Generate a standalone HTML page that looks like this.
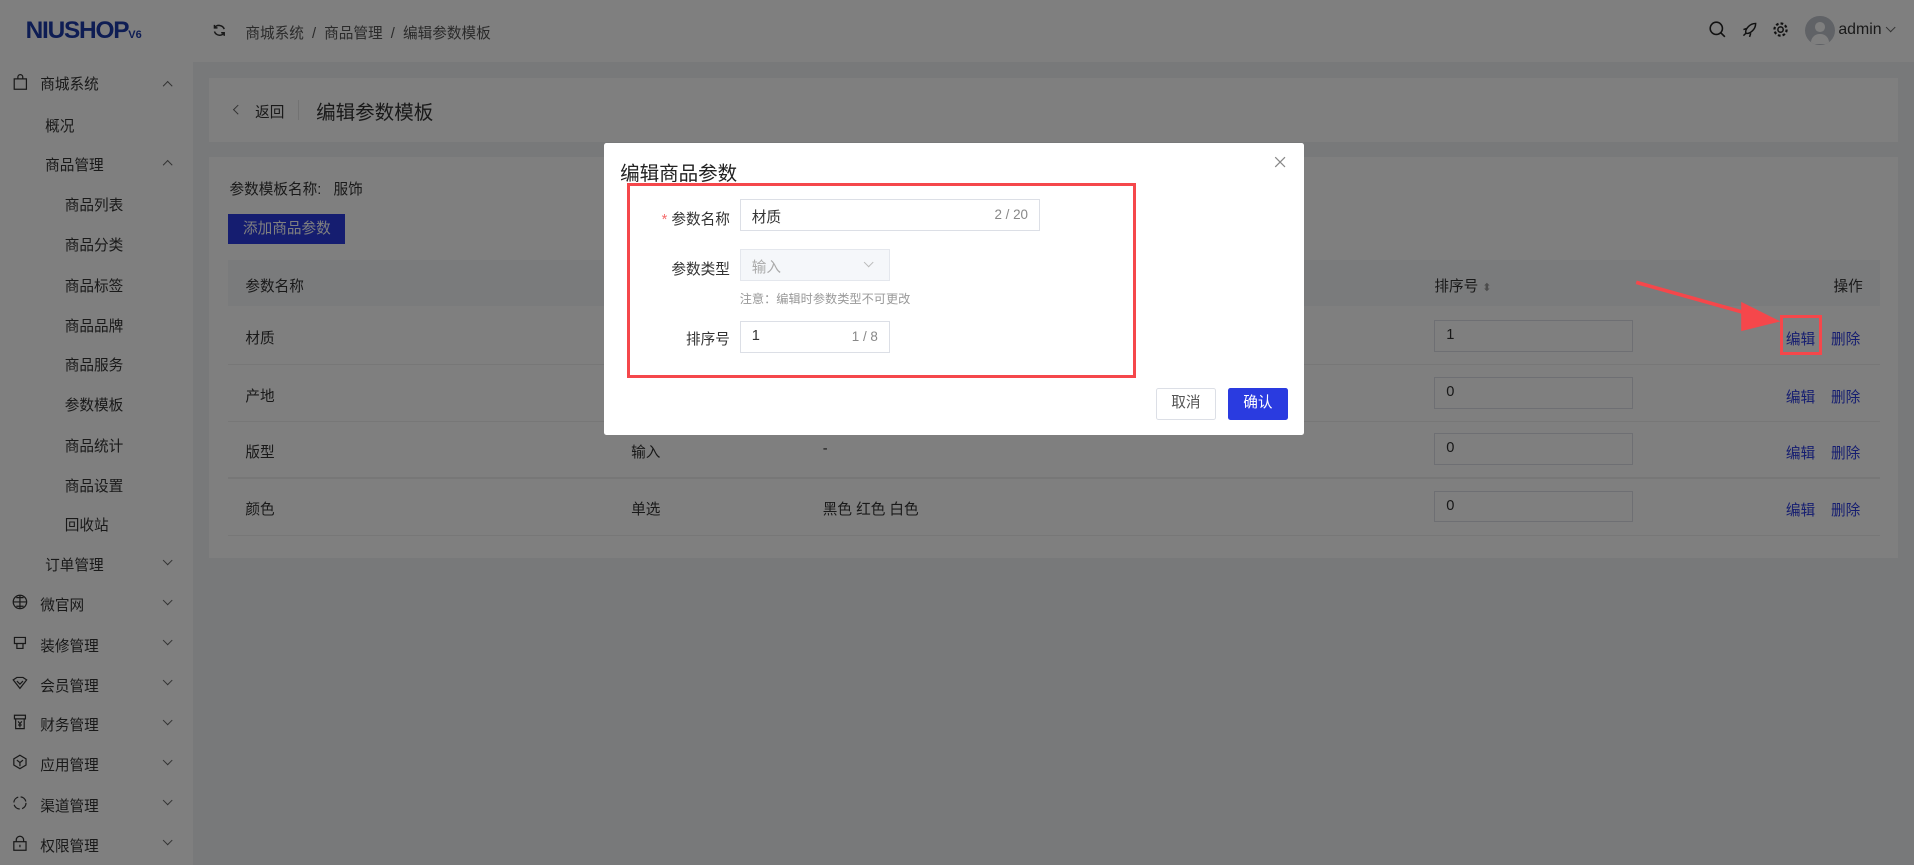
<!DOCTYPE html>
<html><head><meta charset="utf-8"><style>
*{margin:0;padding:0;box-sizing:border-box}
html,body{width:1914px;height:865px;overflow:hidden}
body{font-family:"Liberation Sans","Noto Sans CJK SC",sans-serif;font-size:12px;color:#333;background:#f0f2f5;position:relative}
#w{zoom:1.2207;width:1568px;height:709px;position:relative;overflow:hidden}
.a{position:absolute;white-space:nowrap}
.side{position:absolute;left:0;top:0;width:158px;height:709px;background:#fff}
.hdr{position:absolute;left:158px;top:0;right:0;height:51px;background:#fff}
.card{position:absolute;left:171px;width:1384px;background:#fff}
.chev{position:absolute;width:6px;height:6px;border-right:1px solid #666;border-bottom:1px solid #666}
.inp{position:absolute;border:1px solid #dcdfe6;background:#fff;height:26px}
.ov{position:absolute;left:0;top:0;width:1568px;height:709px;background:rgba(0,0,0,.5)}
.lnk{color:#2a3be0}
</style></head><body><div id="w">
<div class="side">
<div class="a" style="left:21px;top:14px;font-size:20px;font-weight:bold;color:#1c3aa9;letter-spacing:-1px">NIUSHOP<span style="font-size:9px;letter-spacing:0">V6</span></div>
<svg class="a" style="left:11px;top:61px" width="12" height="13" viewBox="0 0 12 13"><rect x="1" y="4" width="10" height="8.5" fill="none" stroke="#333"/><path d="M4 4V2.5a2 2 0 0 1 4 0V4" fill="none" stroke="#333"/></svg>
<div class="a" style="left:33px;top:60px">商城系统</div><div class="chev" style="left:134px;top:67px;transform:rotate(-135deg)"></div>
<div class="a" style="left:37px;top:94px">概况</div>
<div class="a" style="left:37px;top:126px">商品管理</div><div class="chev" style="left:134px;top:132px;transform:rotate(-135deg)"></div>
<div class="a" style="left:53px;top:159px">商品列表</div>
<div class="a" style="left:53px;top:192px">商品分类</div>
<div class="a" style="left:53px;top:225px">商品标签</div>
<div class="a" style="left:53px;top:258px">商品品牌</div>
<div class="a" style="left:53px;top:290px">商品服务</div>
<div class="a" style="left:53px;top:323px">参数模板</div>
<div class="a" style="left:53px;top:356px">商品统计</div>
<div class="a" style="left:53px;top:389px">商品设置</div>
<div class="a" style="left:53px;top:421px">回收站</div>
<div class="a" style="left:37px;top:454px">订单管理</div><div class="chev" style="left:134px;top:456px;transform:rotate(45deg)"></div>
<div class="a" style="left:33px;top:487px">微官网</div>
<div class="a" style="left:33px;top:520px">装修管理</div>
<div class="a" style="left:33px;top:553px">会员管理</div>
<div class="a" style="left:33px;top:585px">财务管理</div>
<div class="a" style="left:33px;top:618px">应用管理</div>
<div class="a" style="left:33px;top:651px">渠道管理</div>
<div class="a" style="left:33px;top:684px">权限管理</div>
<div class="chev" style="left:134px;top:489px;transform:rotate(45deg)"></div>
<div class="chev" style="left:134px;top:522px;transform:rotate(45deg)"></div>
<div class="chev" style="left:134px;top:555px;transform:rotate(45deg)"></div>
<div class="chev" style="left:134px;top:587px;transform:rotate(45deg)"></div>
<div class="chev" style="left:134px;top:620px;transform:rotate(45deg)"></div>
<div class="chev" style="left:134px;top:653px;transform:rotate(45deg)"></div>
<div class="chev" style="left:134px;top:686px;transform:rotate(45deg)"></div>
<svg class="a" style="left:10px;top:487px" width="13" height="13"><circle cx="6.5" cy="6.5" r="5.5" fill="none" stroke="#333"/><path d="M1 6.5h11M6.5 1v11M3.5 3h6M3.5 10h6" stroke="#333" fill="none"/></svg>
<svg class="a" style="left:10px;top:520px" width="13" height="13"><path d="M2 2h9v5H2zM4 7v4h5V7" stroke="#333" fill="none"/></svg>
<svg class="a" style="left:10px;top:553px" width="13" height="13"><path d="M1 4l3-2h5l3 2-5.5 7z M4 5l2.5 2.5L9 5" stroke="#333" fill="none"/></svg>
<svg class="a" style="left:10px;top:585px" width="13" height="13"><path d="M2 1h9v3H2zM3 4v8h7V4M5 6l1.5 2L8 6M6.5 8v3M5 9h3" stroke="#333" fill="none"/></svg>
<svg class="a" style="left:10px;top:618px" width="13" height="13"><path d="M6.5 1l5 3v5l-5 3-5-3V4zM4 5l2.5 2L9 5M6.5 7v3" stroke="#333" fill="none"/></svg>
<svg class="a" style="left:10px;top:651px" width="13" height="13"><circle cx="6.5" cy="6.5" r="5" fill="none" stroke="#333" stroke-dasharray="6 2"/></svg>
<svg class="a" style="left:10px;top:684px" width="13" height="13"><rect x="1.5" y="5.5" width="10" height="7" fill="none" stroke="#333"/><path d="M3.5 5.5V4a3 3 0 0 1 6 0v1.5M6.5 8v2" stroke="#333" fill="none"/></svg>
</div>
<div class="hdr">
<svg class="a" style="left:16px;top:19px" width="12" height="12"><path d="M10 5A4.5 4.5 0 0 0 2 4M2 7a4.5 4.5 0 0 0 8 1M2 1.5V4h2.5M10 10.5V8H7.5" stroke="#333" fill="none" stroke-width="1.2"/></svg>
<div class="a" style="left:43px;top:18px;color:#555">商城系统 &nbsp;/&nbsp; 商品管理 &nbsp;/&nbsp; 编辑参数模板</div>
<svg class="a" style="left:1242px;top:17px" width="14" height="14"><circle cx="6" cy="6" r="5" fill="none" stroke="#222" stroke-width="1.3"/><path d="M9.5 9.5L13 13" stroke="#222" stroke-width="1.3"/></svg>
<svg class="a" style="left:1268px;top:17px" width="14" height="14"><path d="M4 10C3 7 7 2 12 2c0 5-5 9-8 8zM4 10l-2 2M5 6L2 7M8 10l-1 3" stroke="#222" fill="none" stroke-width="1.2"/></svg>
<svg class="a" style="left:1294px;top:17px" width="14" height="14"><circle cx="7" cy="7" r="2.2" fill="none" stroke="#222" stroke-width="1.2"/><circle cx="7" cy="7" r="5" fill="none" stroke="#222" stroke-width="1.8" stroke-dasharray="2.2 1.7"/></svg>
<div class="a" style="left:1321px;top:13px;width:24px;height:24px;border-radius:50%;background:#c0c4cc;overflow:hidden"><div style="position:absolute;left:8px;top:5px;width:8px;height:8px;border-radius:50%;background:#fff"></div><div style="position:absolute;left:5px;top:15px;width:14px;height:8px;border-radius:7px 7px 0 0;background:#fff"></div></div>
<div class="a" style="left:1348px;top:17px;font-size:13px;color:#333">admin</div>
<div class="chev" style="left:1388px;top:20px;transform:rotate(45deg)"></div>
</div>
<div class="card" style="top:64px;height:52px">
<div class="chev" style="left:21px;top:23px;transform:rotate(135deg)"></div>
<div class="a" style="left:38px;top:19px">返回</div>
<div class="a" style="left:73px;top:18px;width:1px;height:16px;background:#e4e4e4"></div>
<div class="a" style="left:88px;top:15px;font-size:16px">编辑参数模板</div>
</div>
<div class="card" style="top:129px;height:328px">
<div class="a" style="left:17px;top:17px">参数模板名称: &nbsp; 服饰</div>
<div class="a" style="left:16px;top:46px;width:96px;height:25px;background:#2a3be0;color:#fff;text-align:center;line-height:25px">添加商品参数</div>
<div class="a" style="left:16px;top:84px;width:1353px;height:38px;background:#f5f6f9"></div>
<div class="a" style="left:30px;top:96px">参数名称</div>
<div class="a" style="left:1004px;top:96px">排序号 <span style="color:#999;font-size:9px">⬍</span></div>
<div class="a" style="left:1331px;top:96px">操作</div>
</div>
<div class="a" style="left:187px;top:298px;width:1353px;height:1px;background:#eee"></div>
<div class="a" style="left:187px;top:345px;width:1353px;height:1px;background:#eee"></div>
<div class="a" style="left:187px;top:391px;width:1353px;height:1px;background:#eee"></div>
<div class="a" style="left:187px;top:438px;width:1353px;height:1px;background:#eee"></div>
<div class="a" style="left:201px;top:268px">材质</div>
<div class="a" style="left:201px;top:315px">产地</div>
<div class="a" style="left:201px;top:361px">版型</div>
<div class="a" style="left:201px;top:408px">颜色</div>
<div class="a" style="left:517px;top:361px">输入</div><div class="a" style="left:674px;top:361px">-</div>
<div class="a" style="left:517px;top:408px">单选</div><div class="a" style="left:674px;top:408px">黑色 红色 白色</div>
<div class="inp" style="left:1175px;top:262px;width:163px"><span class="a" style="left:9px;top:5px">1</span></div>
<div class="inp" style="left:1175px;top:309px;width:163px"><span class="a" style="left:9px;top:5px">0</span></div>
<div class="inp" style="left:1175px;top:355px;width:163px"><span class="a" style="left:9px;top:5px">0</span></div>
<div class="inp" style="left:1175px;top:402px;width:163px"><span class="a" style="left:9px;top:5px">0</span></div>
<div class="a lnk" style="left:1463px;top:269px">编辑</div><div class="a lnk" style="left:1500px;top:269px">删除</div>
<div class="a lnk" style="left:1463px;top:316px">编辑</div><div class="a lnk" style="left:1500px;top:316px">删除</div>
<div class="a lnk" style="left:1463px;top:362px">编辑</div><div class="a lnk" style="left:1500px;top:362px">删除</div>
<div class="a lnk" style="left:1463px;top:409px">编辑</div><div class="a lnk" style="left:1500px;top:409px">删除</div>
<div class="ov"></div>
<div class="a" style="left:1458px;top:258px;width:35px;height:33px;border:3px solid #f5474b"></div>
<svg class="a" style="left:1330px;top:225px" width="130" height="50"><path d="M10 6L110 34" stroke="#f5474b" stroke-width="3"/><path d="M96 22L128 38 96 46z" fill="#f5474b"/></svg>
<div class="a" style="left:495px;top:117px;width:573px;height:239px;background:#fff;border-radius:2px">
<div class="a" style="left:13px;top:12px;font-size:16px;color:#222">编辑商品参数</div>
<svg class="a" style="left:549px;top:11px" width="10" height="10"><path d="M1 1l8 8M9 1L1 9" stroke="#888" stroke-width="1"/></svg>
<div class="a" style="left:19px;top:33px;width:417px;height:160px;border:3px solid #f5474b"></div>
<div class="a" style="left:47px;top:53px"><span style="color:#f56c6c">*</span> 参数名称</div>
<div class="inp" style="left:111px;top:46px;width:246px"><span class="a" style="left:9px;top:5px">材质</span><span class="a" style="right:9px;top:6px;color:#888;font-size:11px">2 / 20</span></div>
<div class="a" style="left:55px;top:94px">参数类型</div>
<div class="inp" style="left:111px;top:87px;width:123px;background:#f5f7fa;border-color:#e4e7ed"><span class="a" style="left:9px;top:5px;color:#aaa">输入</span><div class="chev" style="left:102px;top:7px;transform:rotate(45deg);border-color:#bbb"></div></div>
<div class="a" style="left:111px;top:120px;font-size:10px;color:#999">注意：编辑时参数类型不可更改</div>
<div class="a" style="left:67px;top:152px">排序号</div>
<div class="inp" style="left:111px;top:146px;width:123px"><span class="a" style="left:9px;top:5px">1</span><span class="a" style="right:9px;top:6px;color:#888;font-size:11px">1 / 8</span></div>
<div class="a" style="left:452px;top:201px;width:49px;height:26px;border:1px solid #dcdfe6;border-radius:2px;text-align:center;line-height:24px;color:#555">取消</div>
<div class="a" style="left:511px;top:201px;width:49px;height:26px;background:#2a3be0;border-radius:2px;text-align:center;line-height:26px;color:#fff">确认</div>
</div>
</div></body></html>
